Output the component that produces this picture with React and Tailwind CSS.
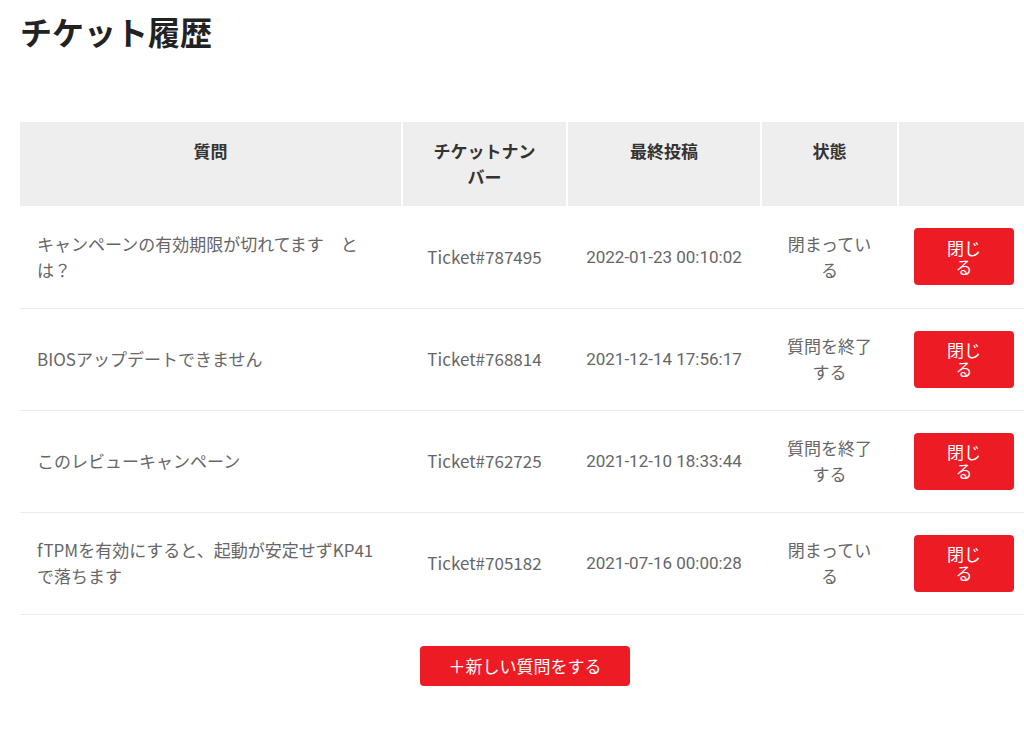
import React from "react";

const rows = [
  { q: "キャンペーンの有効期限が切れてます　とは？", t: "Ticket#787495", d: "2022-01-23 00:10:02", s: "閉まっている" },
  { q: "BIOSアップデートできません", t: "Ticket#768814", d: "2021-12-14 17:56:17", s: "質問を終了する" },
  { q: "このレビューキャンペーン", t: "Ticket#762725", d: "2021-12-10 18:33:44", s: "質問を終了する" },
  { q: "fTPMを有効にすると、起動が安定せずKP41で落ちます", t: "Ticket#705182", d: "2021-07-16 00:00:28", s: "閉まっている" },
];

export default function App() {
  return (
    <div
      className="w-[1024px] h-[740px] bg-white overflow-hidden"
      style={{ fontFamily: '"Noto Sans CJK JP", "Noto Sans", sans-serif' }}
    >
      <h1 className="pl-[20px] pt-[10px] text-[32px] leading-[42px] font-bold text-[#222]">チケット履歴</h1>
      <div className="pl-[20px] mt-[70px]">
        <table className="table-fixed border-collapse w-[1004px] text-[17px]">
          <colgroup>
            <col className="w-[382px]" />
            <col className="w-[165px]" />
            <col className="w-[194px]" />
            <col className="w-[137px]" />
            <col className="w-[126px]" />
          </colgroup>
          <thead>
            <tr className="bg-[#eeeeee] h-[84px]">
              <th className="align-top pt-[16px] px-[20px] font-bold text-[#333] leading-[26px] border-r-2 border-white">質問</th>
              <th className="align-top pt-[16px] px-[28px] font-bold text-[#333] leading-[26px] border-r-2 border-white">チケットナンバー</th>
              <th className="align-top pt-[16px] px-[20px] font-bold text-[#333] leading-[26px] border-r-2 border-white">最終投稿</th>
              <th className="align-top pt-[16px] px-[20px] font-bold text-[#333] leading-[26px] border-r-2 border-white">状態</th>
              <th></th>
            </tr>
          </thead>
          <tbody>
            {rows.map((r) => (
              <tr key={r.t} className="h-[102px] border-b border-[#ebebeb]">
                <td className="px-[17px] text-left text-[#666] leading-[26px]">{r.q}</td>
                <td className="px-[20px] text-center text-[#666] leading-[26px]">{r.t}</td>
                <td
                  className="px-[8px] text-center text-[#666] text-[17px] leading-[26px]"
                  style={{ fontFamily: 'Roboto, "Noto Sans", sans-serif' }}
                >
                  {r.d}
                </td>
                <td className="px-[22px] text-center text-[#666] leading-[26px]">{r.s}</td>
                <td className="pl-[16px] pr-[10px]">
                  <button className="w-[100px] h-[57px] rounded-[4px] bg-[#ed1c24] text-white text-[17px] leading-[19px] px-[28px]">
                    閉じる
                  </button>
                </td>
              </tr>
            ))}
          </tbody>
        </table>
        <div className="flex justify-center pl-[6px] mt-[31px]">
          <button className="w-[210px] h-[40px] rounded-[4px] bg-[#ed1c24] text-white text-[17px]">
            ＋新しい質問をする
          </button>
        </div>
      </div>
    </div>
  );
}
